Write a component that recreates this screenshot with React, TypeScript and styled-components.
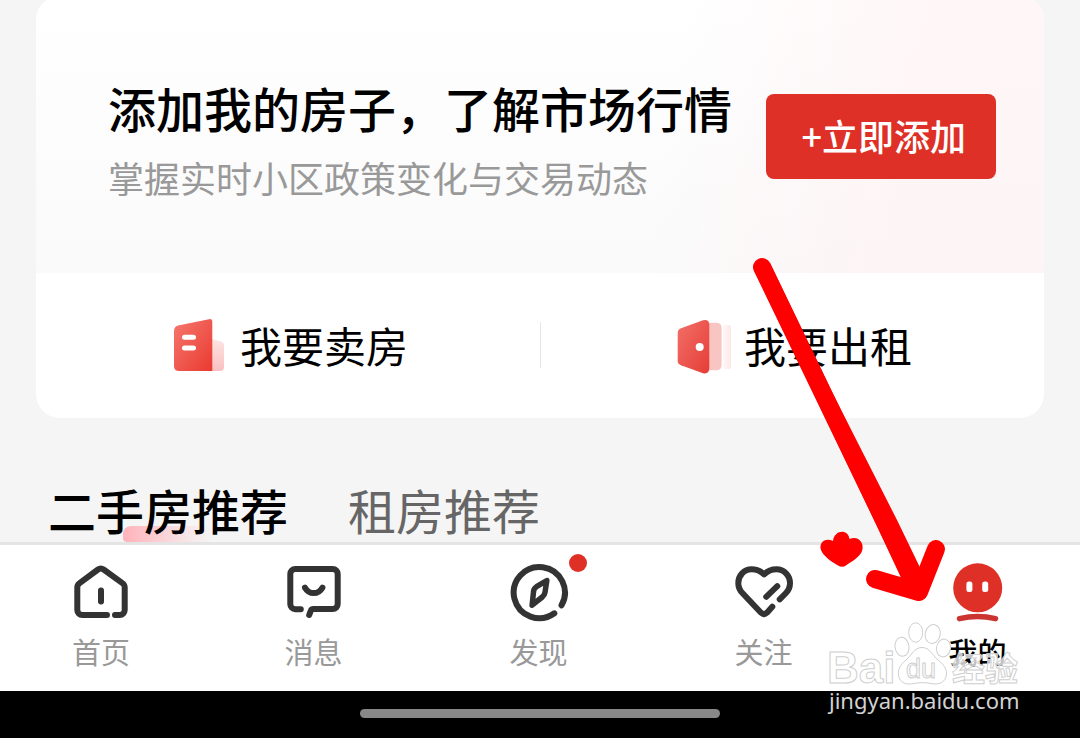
import React from "react";
import styled, { createGlobalStyle, css } from "styled-components";

const GlobalStyle = createGlobalStyle`
  *, *::before, *::after { box-sizing: border-box; }
  body {
    margin: 0;
    background: #f5f5f5;
    color: #000;
    font-family: "Noto Sans CJK SC", "Noto Sans", sans-serif;
  }
  h2, p { margin: 0; font-weight: inherit; }
  button { font: inherit; border: 0; padding: 0; background: none; cursor: pointer; }
  a { color: inherit; text-decoration: none; }
`;

const Page = styled.div`
  position: relative;
  display: flex;
  flex-direction: column;
  min-height: 100vh;
  overflow: hidden;
`;

const Content = styled.main`
  flex: 1;
  padding: 0 36px;
`;

const Card = styled.section`
  margin-top: -4px;
  border-radius: 24px;
  background: #fff;
  overflow: hidden;
`;

const Promo = styled.div`
  display: flex;
  align-items: center;
  justify-content: space-between;
  padding: 76px 48px 73px 72px;
  background:
    linear-gradient(100deg, rgba(255, 240, 242, 0) 62%, rgba(255, 240, 242, 0.6) 85%),
    linear-gradient(#fff, #fafafa);
`;

const PromoTitle = styled.h2`
  font-size: 48px;
  font-weight: 500;
  line-height: 70px;
`;

const PromoText = styled.p`
  padding-top: 12px;
  color: #999;
  font-size: 36px;
  font-weight: 400;
  line-height: 46px;
`;

const AddButton = styled.button`
  && {
    flex: none;
    padding: 15px 30px 18px 35px;
    border-radius: 8px;
    background: #de3026;
    color: #fff;
    font-size: 36px;
    font-weight: 500;
    line-height: 52px;
  }
`;

const Actions = styled.div`
  display: grid;
  grid-template-columns: 1fr 1fr;
  padding: 39px 0 41px;
`;

const Action = styled.button`
  && {
    display: flex;
    align-items: center;
    justify-content: center;
    gap: 12px;
    color: #000;
    font-size: 42px;
    line-height: 65px;
  }
  & + & {
    background: linear-gradient(#e6e6e6, #e6e6e6) left center / 1px 46px no-repeat;
  }
`;

const Tabs = styled.div`
  display: flex;
  gap: 60px;
  padding: 61px 12px 0;
`;

const Tab = styled.button<{ $active?: boolean }>`
  && {
    position: relative;
    z-index: 0;
    padding-bottom: 3px;
    color: #666;
    font-size: 48px;
    line-height: 60px;
  }
  ${({ $active }) =>
    $active &&
    css`
      && {
        color: #000;
        font-weight: 500;
      }
      &::before {
        content: "";
        position: absolute;
        z-index: -1;
        left: 75px;
        bottom: 0;
        width: 90px;
        height: 16px;
        border-radius: 8px 0 0 4px;
        background: linear-gradient(90deg, #ffb3ba, rgba(255, 179, 186, 0.25) 70%, rgba(255, 179, 186, 0));
      }
    `}
`;

const NavBar = styled.nav`
  display: grid;
  grid-template-columns: 202fr 223fr 227fr 223fr 205fr;
  padding: 17px 0 18px;
  border-top: 3px solid #e4e4e4;
  background: #fff;
`;

const NavItem = styled.a<{ $active?: boolean }>`
  display: flex;
  flex-direction: column;
  align-items: center;
  gap: 8px;
  color: ${({ $active }) => ($active ? "#000" : "#999")};
  font-size: 29px;
  font-weight: ${({ $active }) => ($active ? 500 : 400)};
  line-height: 43px;
`;

const IconSlot = styled.span`
  position: relative;
  display: block;
  width: 60px;
  height: 60px;
`;

const Badge = styled.span`
  position: absolute;
  top: -8px;
  right: -18px;
  width: 18px;
  height: 18px;
  border-radius: 50%;
  background: #de3026;
`;

const SystemBar = styled.footer`
  display: flex;
  justify-content: center;
  padding: 18px 0 20px;
  background: #000;
`;

const HomeIndicator = styled.span`
  width: 33.33%;
  height: 9px;
  border-radius: 5px;
  background: #888;
`;

const Arrow = styled.svg`
  position: absolute;
  top: 250px;
  right: 130px;
  pointer-events: none;
`;

const Watermark = styled.div`
  position: absolute;
  right: 56px;
  bottom: 26px;
  display: flex;
  flex-direction: column;
  pointer-events: none;
`;

const LogoDrawing = styled.svg`
  overflow: visible;
`;

const WatermarkSite = styled.span`
  padding-left: 4px;
  color: #d2d2d2;
  font-family: "Noto Sans", "Open Sans", sans-serif;
  font-size: 22px;
  font-weight: 400;
  line-height: 24px;
`;

const stroke = {
  fill: "none",
  stroke: "#333",
  strokeWidth: 6,
  strokeLinecap: "round",
  strokeLinejoin: "round",
} as const;

const HomeIcon = () => (
  <svg width="60" height="60" viewBox="0 0 60 60" {...stroke} aria-hidden="true">
    <path d="M36 53H11.3a5 5 0 0 1-5-5V25.5c0-2 .7-3.3 2.3-4.4L27 7.5q2.8-2 5.6 0L51.4 21.1c1.6 1.1 2.3 2.4 2.3 4.4V48a5 5 0 0 1-5 5H44" />
    <path d="M30 28.5V39.5" />
  </svg>
);

const MessageIcon = () => (
  <svg width="60" height="60" viewBox="0 0 60 60" {...stroke} aria-hidden="true">
    <path d="M16.8 47.2H11.3a5 5 0 0 1-5-5V12a5 5 0 0 1 5-5H48.7a5 5 0 0 1 5 5V42a5 5 0 0 1-5 5H29.5q-2.2 0-2.8 2L25.2 53" />
    <path d="M21 25.7c4.2 7.2 13.2 7.2 17.4 0" />
  </svg>
);

const CompassIcon = () => (
  <svg width="60" height="60" viewBox="0 0 60 60" {...stroke} aria-hidden="true">
    <path d="M52.5 43.3A25.6 25.6 0 1 0 45.3 51.3" />
    <path strokeWidth="5.5" d="M37.8 18.5L27.5 24.7Q25 26.3 24.6 29L23.1 43.2L33.3 35Q35.6 33 36 30.4Z" />
  </svg>
);

const HeartIcon = () => (
  <svg width="60" height="60" viewBox="0 0 60 60" {...stroke} aria-hidden="true">
    <path d="M45.7 37.3L51.5 31.5C54.5 28.5 56 25.2 56 21.2C56 13.5 50 7.3 42.5 7.3C37.3 7.3 33.6 9 30.1 12.4C26.6 9 22.8 7.3 17.6 7.3C10 7.3 4.3 13.5 4.3 21.2C4.3 25.2 5.8 28.3 8.6 31.3L27 50.7Q30 53.6 33 50.7L38.3 44.7" />
    <path d="M43.3 24.2L32.2 34.8" />
  </svg>
);

const MineIcon = () => (
  <svg width="60" height="60" viewBox="0 0 60 60" aria-hidden="true">
    <circle cx="29.7" cy="25.8" r="24.5" fill="#de3026" />
    <rect x="18.4" y="19.5" width="6" height="10.5" rx="2.5" fill="#fff" />
    <rect x="34.2" y="19.5" width="6" height="10.5" rx="2.5" fill="#fff" />
    <path d="M11.5 56.7Q29.5 52.4 47.5 56.7" fill="none" stroke="#cb3430" strokeWidth="5.5" strokeLinecap="round" />
  </svg>
);

const SellIcon = () => (
  <svg width="60" height="60" viewBox="0 0 60 60" aria-hidden="true">
    <defs>
      <linearGradient id="sell" x1="0" y1="0" x2="1" y2="1">
        <stop offset="0" stopColor="#f5786f" />
        <stop offset="1" stopColor="#ea3a30" />
      </linearGradient>
      <linearGradient id="sellSide" x1="0" y1="0" x2="0" y2="1">
        <stop offset="0" stopColor="#fde4e3" />
        <stop offset="1" stopColor="#f9c0c0" />
      </linearGradient>
    </defs>
    <path d="M44 24L53 26.5Q56 27.5 56 30V52Q56 56 52 56H44Z" fill="url(#sellSide)" />
    <path d="M6 16Q6 11.6 10 10.4L41 4.2Q44.3 3.6 44.3 7V56H11Q6 56 6 51Z" fill="url(#sell)" />
    <path d="M16.5 22.3H25.5M16.5 33H25.5" stroke="#fff" strokeWidth="5" strokeLinecap="round" />
  </svg>
);

const RentIcon = () => (
  <svg width="60" height="60" viewBox="0 0 60 60" aria-hidden="true">
    <defs>
      <linearGradient id="rent" x1="0" y1="0" x2="1" y2="1">
        <stop offset="0" stopColor="#f27068" />
        <stop offset="1" stopColor="#e53d36" />
      </linearGradient>
      <linearGradient id="rentFade" x1="0" y1="0" x2="1" y2="0">
        <stop offset="0" stopColor="#fef8f7" />
        <stop offset="1" stopColor="#fce8e6" />
      </linearGradient>
    </defs>
    <rect x="51" y="10" width="8" height="44" rx="2" fill="url(#rentFade)" />
    <path d="M36 7.7H45Q49.6 8 49.6 13V50Q49.6 55 45 55.3H36Z" fill="#f9c5c3" />
    <path d="M5.7 18Q5.7 14.5 9 13.2L31 5.3Q37.3 3.8 37.3 10V53Q37.3 59.5 31 58.2L9 50.3Q5.7 49 5.7 46Z" fill="url(#rent)" />
    <circle cx="27.7" cy="32" r="4" fill="#fff" />
  </svg>
);

const WatermarkLogo = () => (
  <LogoDrawing width="199" height="68" viewBox="825 620 199 68" fill="#fff" fillOpacity="0.75" stroke="#cfcfcf" strokeWidth="1" aria-label="Baidu 经验">
    <text x="827" y="683" fontFamily="Liberation Sans, sans-serif" fontSize="44" fontWeight="700">Bai</text>
    <ellipse cx="915.7" cy="632.5" rx="7" ry="9.7" />
    <ellipse cx="932.7" cy="634" rx="7.5" ry="9.5" transform="rotate(12 932.7 634)" />
    <ellipse cx="902" cy="646.7" rx="7" ry="9.5" transform="rotate(-8 902 646.7)" />
    <ellipse cx="943.5" cy="648" rx="7" ry="9" transform="rotate(10 943.5 648)" />
    <path d="M922 647.5C914 647.5 912 655 906 660C900 665 898 669 898.5 675C899.5 684 908 685 914 683.5C920 682.3 925 682.3 931 683.5C938 685 946 683 946.5 674C946.7 668 943 664 938 660C932 655 930 647.5 922 647.5Z" />
    <text x="906" y="678" fontFamily="Liberation Sans, sans-serif" fontSize="27">du</text>
    <text x="952" y="681" fontFamily="Noto Sans CJK SC, sans-serif" fontSize="33" fontWeight="700">经验</text>
  </LogoDrawing>
);

const NAV = [
  { label: "首页", icon: <HomeIcon /> },
  { label: "消息", icon: <MessageIcon /> },
  { label: "发现", icon: <CompassIcon />, badge: true },
  { label: "关注", icon: <HeartIcon /> },
  { label: "我的", icon: <MineIcon />, active: true },
];

export default function App() {
  return (
    <Page>
      <GlobalStyle />
      <Content>
        <Card>
          <Promo>
            <div>
              <PromoTitle>添加我的房子，了解市场行情</PromoTitle>
              <PromoText>掌握实时小区政策变化与交易动态</PromoText>
            </div>
            <AddButton type="button">+立即添加</AddButton>
          </Promo>
          <Actions>
            <Action type="button">
              <SellIcon />
              我要卖房
            </Action>
            <Action type="button">
              <RentIcon />
              我要出租
            </Action>
          </Actions>
        </Card>
        <Tabs>
          <Tab type="button" $active>二手房推荐</Tab>
          <Tab type="button">租房推荐</Tab>
        </Tabs>
      </Content>
      <NavBar>
        {NAV.map((item) => (
          <NavItem key={item.label} href="#" $active={item.active}>
            <IconSlot>
              {item.icon}
              {item.badge && <Badge />}
            </IconSlot>
            {item.label}
          </NavItem>
        ))}
      </NavBar>
      <SystemBar>
        <HomeIndicator />
      </SystemBar>
      <Watermark>
        <WatermarkLogo />
        <WatermarkSite>jingyan.baidu.com</WatermarkSite>
      </Watermark>
      <Arrow width="200" height="360" viewBox="750 250 200 360" aria-hidden="true">
        <g fill="none" stroke="#f00" strokeWidth="18" strokeLinecap="round" strokeLinejoin="round">
          <path d="M762 267L912 578" />
          <path d="M875 579L919 592L936 549" />
        </g>
        <path d="M754 270L770 263L831 390L897 520L927 582L919 596L903 582L875 522L812 390Z" fill="#f00" />
        <path d="M833 541C834 530 848 528 849.5 539C858 535 865 543 862 551C860 557 851 562 846 565.5Q842 568 838 565.5C832 562 823 556 821 550C818.5 543 825 537 833 541Z" fill="#f00" />
      </Arrow>
    </Page>
  );
}
